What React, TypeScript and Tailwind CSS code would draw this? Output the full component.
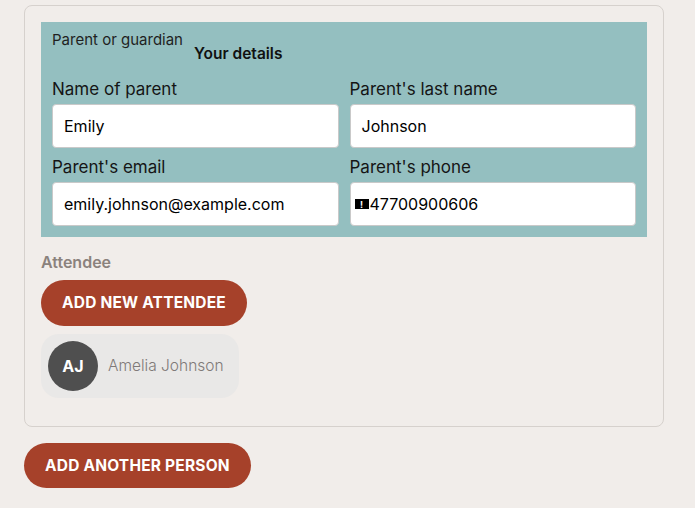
export default function App() {
  return (
    <div className="min-h-screen bg-[#f1edea] pt-[5px] pl-[24px] font-['Inter',sans-serif]">
      <div className="w-[640px] rounded-lg border border-[#d6d1cd] p-4 pb-7">
        <div className="bg-[#94bfc0] px-[11px] pt-[8px] pb-[11px]">
          <div className="flex items-start gap-[11px]">
            <span className="text-[15px] leading-[20px] text-[#1f1f1f]">Parent or guardian</span>
            <span className="mt-[14px] text-[15.5px] font-semibold leading-[20px] text-[#111]">Your details</span>
          </div>
          <div className="mt-[14px] grid grid-cols-2 gap-x-[11px] gap-y-[8px]">
            <Field label="Name of parent" value="Emily" />
            <Field label="Parent's last name" value="Johnson" />
            <Field label="Parent's email" value="emily.johnson@example.com" />
            <Field
              label="Parent's phone"
              value={
                <span className="flex items-center">
                  <span className="-ml-[7px] mr-[1px] flex h-[10px] w-[14px] items-center justify-center bg-black text-[9px] font-bold leading-none text-white">!</span>
                  47700900606
                </span>
              }
            />
          </div>
        </div>
        <div className="mt-[16px] text-[16px] font-semibold leading-[18px] text-[#8b827d]">Attendee</div>
        <button className="mt-[9px] h-[46px] rounded-full bg-[#a6412a] px-[21px] text-[15.5px] font-bold tracking-[0.2px] text-white">
          ADD NEW ATTENDEE
        </button>
        <div className="mt-[8px] flex h-[64px] w-[198px] items-center gap-[10px] rounded-[18px] bg-[#e9e8e7] px-[7px]">
          <div className="flex h-[50px] w-[50px] items-center justify-center rounded-full bg-[#4f4f4f] text-[16px] font-bold text-white">
            AJ
          </div>
          <span className="text-[15.5px] font-light text-[#7f7a78]">Amelia Johnson</span>
        </div>
      </div>
      <button className="mt-[16px] h-[45px] rounded-full bg-[#a6412a] px-[21px] text-[15.5px] font-bold tracking-[0.2px] text-white">
        ADD ANOTHER PERSON
      </button>
    </div>
  );
}

function Field({ label, value }: { label: string; value: React.ReactNode }) {
  return (
    <div className="flex flex-col">
      <span className="text-[17px] leading-[22px] text-[#151515]">{label}</span>
      <div className="mt-[4px] flex h-[44px] items-center rounded-[4px] border border-[#c9c9c9] bg-white px-[11px] text-[16px] text-black">
        {value}
      </div>
    </div>
  );
}
